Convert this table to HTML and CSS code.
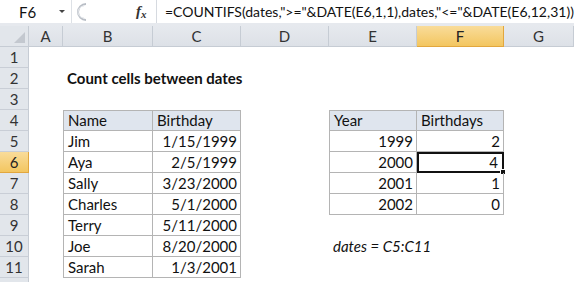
FILE: index.html
```html
<!DOCTYPE html>
<html>
<head>
<meta charset="utf-8">
<link rel="stylesheet" href="styles.css">
</head>
<body>
<div class="app">
  <div class="fbar">
    <div class="namebox"><span class="ref">F6</span><span class="dd"></span></div>
    <div class="grip">
      <svg width="14" height="20" viewBox="0 0 14 20"><path d="M11 2 A8 8 0 0 0 11 18" fill="none" stroke="#b9bec6" stroke-width="2"/><path d="M9 4 A6 6 0 0 0 9 16" fill="none" stroke="#e6e9ed" stroke-width="1"/></svg>
    </div>
    <div class="fx"><i>f</i><i class="x">x</i></div>
    <div class="formula">=COUNTIFS(dates,"&gt;="&amp;DATE(E6,1,1),dates,"&lt;="&amp;DATE(E6,12,31))</div>
  </div>
  <div class="sheet">
    <div class="corner"></div>
    <div class="ch">A</div><div class="ch">B</div><div class="ch">C</div><div class="ch">D</div><div class="ch">E</div><div class="ch sel">F</div><div class="ch">G</div>

    <div class="rh">1</div><div class="c"></div><div class="c"></div><div class="c"></div><div class="c"></div><div class="c"></div><div class="c"></div><div class="c"></div>

    <div class="rh">2</div><div class="c"></div><div class="c title">Count cells between dates</div><div class="c"></div><div class="c"></div><div class="c"></div><div class="c"></div><div class="c"></div>

    <div class="rh">3</div><div class="c"></div><div class="c"></div><div class="c"></div><div class="c"></div><div class="c"></div><div class="c"></div><div class="c"></div>

    <div class="rh">4</div><div class="c"></div><div class="c t th tl">Name</div><div class="c t th">Birthday</div><div class="c"></div><div class="c t th tl">Year</div><div class="c t th">Birthdays</div><div class="c"></div>

    <div class="rh">5</div><div class="c"></div><div class="c t tl">Jim</div><div class="c t r">1/15/1999</div><div class="c"></div><div class="c t tl r">1999</div><div class="c t r">2</div><div class="c"></div>

    <div class="rh sel">6</div><div class="c"></div><div class="c t tl">Aya</div><div class="c t r">2/5/1999</div><div class="c"></div><div class="c t tl r">2000</div><div class="c t r active">4<span class="handle"></span></div><div class="c"></div>

    <div class="rh">7</div><div class="c"></div><div class="c t tl">Sally</div><div class="c t r">3/23/2000</div><div class="c"></div><div class="c t tl r">2001</div><div class="c t r">1</div><div class="c"></div>

    <div class="rh">8</div><div class="c"></div><div class="c t tl">Charles</div><div class="c t r">5/1/2000</div><div class="c"></div><div class="c t tl r">2002</div><div class="c t r">0</div><div class="c"></div>

    <div class="rh">9</div><div class="c"></div><div class="c t tl">Terry</div><div class="c t r">5/11/2000</div><div class="c"></div><div class="c"></div><div class="c"></div><div class="c"></div>

    <div class="rh">10</div><div class="c"></div><div class="c t tl">Joe</div><div class="c t r">8/20/2000</div><div class="c"></div><div class="c note">dates = C5:C11</div><div class="c"></div><div class="c"></div>

    <div class="rh">11</div><div class="c"></div><div class="c t tl">Sarah</div><div class="c t r">1/3/2001</div><div class="c"></div><div class="c"></div><div class="c"></div><div class="c"></div>

    <div class="rh"></div><div class="c"></div><div class="c"></div><div class="c"></div><div class="c"></div><div class="c"></div><div class="c"></div><div class="c"></div>
  </div>
</div>
</body>
</html>
```
FILE: styles.css
```css
* { box-sizing: border-box; }
html, body { margin: 0; padding: 0; background: #fff; overflow: hidden; }
body { width: 574px; height: 282px; font-family: Lato, "Liberation Sans", sans-serif; color: #111; }

.app { width: 574px; height: 282px; overflow: hidden; }

.fbar {
  display: flex;
  align-items: stretch;
  height: 26px;
  background: #fff;
  border-bottom: 3px solid #e6e9ee;
}
.namebox {
  flex: 0 0 72px;
  display: flex;
  align-items: center;
  position: relative;
  border-right: 1px solid #dde1e6;
}
.ref { font-size: 15px; margin-left: 19px; color: #111; }
.dd {
  position: absolute;
  left: 59px; top: 10px;
  width: 0; height: 0;
  border-left: 3px solid transparent;
  border-right: 3px solid transparent;
  border-top: 3px solid #444;
}
.grip { flex: 0 0 64px; display: flex; align-items: center; padding-left: 3px; }
.fx {
  flex: 0 0 21px;
  display: flex;
  align-items: center;
  font-family: "Liberation Serif", serif;
  font-size: 15px;
  font-weight: bold;
  color: #333;
  border-right: 1px solid #d6dae0;
}
.fx .x { font-size: 11px; margin-top: 5px; }
.formula {
  flex: 1 1 auto;
  min-width: 0;
  overflow: hidden;
  font-size: 14px;
  padding-left: 8px;
  line-height: 23px;
  white-space: nowrap;
  color: #111;
}

.sheet {
  display: grid;
  grid-template-columns: 29px 34px 90px 88px 88px 88px 87px 70px;
  grid-template-rows: 21px repeat(12, 21px);
}
.corner {
  background: #e2e6eb;
  border-right: 1px solid #c6ccd4;
  border-bottom: 1px solid #c6ccd4;
  position: relative;
}
.corner::after {
  content: "";
  position: absolute;
  right: 3px; bottom: 3px;
  width: 0; height: 0;
  border-left: 11px solid transparent;
  border-bottom: 11px solid #c3c8cf;
}
.ch {
  background: linear-gradient(#e6e9ee, #dde1e7);
  border-right: 1px solid #c6ccd4;
  border-bottom: 1px solid #c6ccd4;
  text-align: center;
  font-size: 15px;
  line-height: 20px;
  color: #333;
}
.ch.sel, .rh.sel {
  background: linear-gradient(#f9dc9a, #f3c660);
  border-color: #e2a73e;
  color: #222;
}
.rh {
  background: #e2e6eb;
  border-right: 1px solid #c6ccd4;
  border-bottom: 1px solid #c9ced6;
  text-align: center;
  font-size: 15px;
  line-height: 20px;
  color: #333;
}
.c {
  font-size: 15px;
  line-height: 20px;
  padding: 0 3px 0 4px;
  white-space: nowrap;
  overflow: visible;
  position: relative;
}
.title { font-weight: bold; }
.t { border-right: 1px solid #b4b4b4; border-bottom: 1px solid #b4b4b4; }
.tl { border-left: 1px solid #b4b4b4; }
.th { background: #dfe5ee; border-top: 1px solid #b4b4b4; line-height: 19px; }
.r { text-align: right; }
.note { font-style: italic; }
.active {
  outline: 2px solid #111;
  outline-offset: -2px;
  padding-right: 5px;
}
.handle {
  position: absolute;
  right: -3px; bottom: -3px;
  width: 6px; height: 6px;
  background: #111;
  border: 1px solid #fff;
}
```
